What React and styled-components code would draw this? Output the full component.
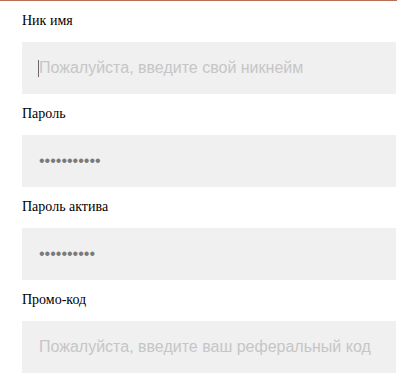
import React from "react";
import styled, { createGlobalStyle } from "styled-components";

const Global = createGlobalStyle`
  html, body { margin: 0; padding: 0; background: #fff; }
  body { font-family: "Liberation Serif", "Times New Roman", serif; }
`;

const Form = styled.form`
  border-top: 1px solid #b86f55;
  padding: 0 1px 0 22px;
  display: flex;
  flex-direction: column;
`;

const Field = styled.div`
  display: flex;
  flex-direction: column;
`;

const Label = styled.label`
  display: block;
  font-family: "Liberation Serif", "Times New Roman", serif;
  font-size: 14px;
  line-height: 18px;
  color: #000;
  padding-top: 11px;
  margin-bottom: 12px;
`;

const InputWrap = styled.div`
  position: relative;
`;

const Caret = styled.span`
  position: absolute;
  left: 16px;
  top: 18px;
  width: 1px;
  height: 17px;
  background: #6a6a6a;
  pointer-events: none;
`;

const Input = styled.input`
  display: block;
  box-sizing: border-box;
  width: 100%;
  height: 52px;
  margin: 0;
  border: none;
  outline: none;
  background: #f0f0f0;
  padding: 0 17px;
  font-family: "Liberation Sans", Arial, sans-serif;
  font-size: 16px;
  color: #7a7a7a;
  caret-color: #555;
  &::placeholder {
    color: #c6c6c6;
    opacity: 1;
  }
`;

const fields = [
  { id: "nick", label: "Ник имя", type: "text", placeholder: "Пожалуйста, введите свой никнейм", value: "", focus: true },
  { id: "pwd", label: "Пароль", type: "password", value: "12345678901" },
  { id: "pwd2", label: "Пароль актива", type: "password", value: "1234567890" },
  { id: "promo", label: "Промо-код", type: "text", placeholder: "Пожалуйста, введите ваш реферальный код", value: "" },
];

export default function App() {
  return (
    <>
      <Global />
      <Form onSubmit={(e) => e.preventDefault()}>
        {fields.map((f) => (
          <Field key={f.id}>
            <Label htmlFor={f.id}>{f.label}</Label>
            <InputWrap>
              <Input
                id={f.id}
                type={f.type}
                placeholder={f.placeholder}
                defaultValue={f.value}
              />
              {f.focus && <Caret />}
            </InputWrap>
          </Field>
        ))}
      </Form>
    </>
  );
}
